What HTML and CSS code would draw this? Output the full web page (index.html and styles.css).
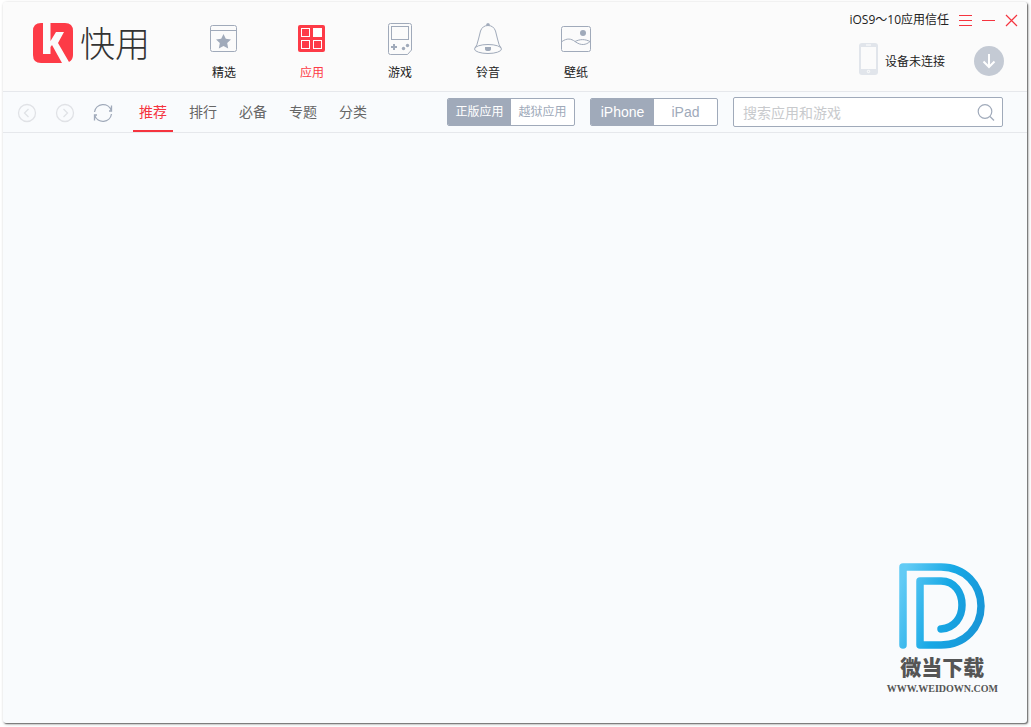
FILE: index.html
```html
<!DOCTYPE html>
<html lang="zh-CN">
<head>
<meta charset="utf-8">
<title>快用</title>
<meta name="viewport" content="width=device-width, initial-scale=1">
<link rel="stylesheet" href="styles.css">
</head>
<body>
<div class="window">
  <header class="header">
    <h1 class="brand">
      <svg class="brand-mark" width="40" height="40" viewBox="0 0 40 40" aria-hidden="true">
        <path d="M10 0V31H17.500V24L19 22L29 40H8Q0 40 0 32V8Q0 0 8 0ZM17.500 0H32Q40 0 40 8V32Q40 37 36 39L25 20L31 9H23L17.500 18Z" fill="#fd3b47"/>
      </svg>
      <span class="brand-name">快用</span>
    </h1>
    <nav class="nav" aria-label="主导航">
      <a class="nav-item" href="#featured">
        <svg width="32" height="34" viewBox="0 0 32 34" fill="none" stroke="#a0aaba" aria-hidden="true">
          <rect x="2.500" y="3.500" width="26" height="26" rx="2"/><path d="M2.500 8.500H28.500"/>
          <path d="M15.500 12L17.800 16.800L23 17.500L19.200 21.100L20.200 26.500L15.500 24L10.800 26.500L11.800 21.100L8 17.500L13.200 16.800Z" fill="#a0aaba" stroke="none"/>
        </svg>
        <span>精选</span>
      </a>
      <a class="nav-item is-active" href="#apps" aria-current="page">
        <svg width="32" height="34" viewBox="0 0 32 34" fill="none" stroke="#fff" aria-hidden="true">
          <rect x="2" y="3" width="27" height="27" rx="2" fill="#fd3b47" stroke="none"/>
          <rect x="5.500" y="6.500" width="8" height="8"/><rect x="17.500" y="6.500" width="8" height="8" fill="#fff"/>
          <rect x="5.500" y="18.500" width="8" height="8"/><rect x="17.500" y="18.500" width="8" height="8"/>
        </svg>
        <span>应用</span>
      </a>
      <a class="nav-item" href="#games">
        <svg width="32" height="34" viewBox="0 0 32 34" fill="none" stroke="#a0aaba" aria-hidden="true">
          <path d="M6.500 1.500H25.500Q27.500 1.500 27.500 3.500V28L23.500 32.500H6.500Q4.500 32.500 4.500 30.500V3.500Q4.500 1.500 6.500 1.500Z"/>
          <rect x="7.500" y="4.500" width="17" height="13"/>
          <path d="M7 25H13M10 22V28" stroke-width="2"/>
          <g fill="#a0aaba" stroke="none"><circle cx="19.500" cy="26.500" r="1.700"/><circle cx="23.500" cy="23.500" r="1.700"/></g>
        </svg>
        <span>游戏</span>
      </a>
      <a class="nav-item" href="#ringtones">
        <svg width="32" height="34" viewBox="0 0 32 34" fill="none" stroke="#a0aaba" aria-hidden="true">
          <ellipse cx="16" cy="27" rx="13.500" ry="4.500"/>
          <path d="M3 26Q5 24 6.500 17L8.500 9Q10.500 3.500 16 3.500T23.500 9L25.500 17Q27 24 29 26"/>
          <path d="M14 3.500Q14 1 16 1T18 3.500ZM13 25H19V27Q19 29 16 29Q13 29 13 27Z" fill="#a0aaba" stroke="none"/>
        </svg>
        <span>铃音</span>
      </a>
      <a class="nav-item" href="#wallpapers">
        <svg width="32" height="34" viewBox="0 0 32 34" fill="none" stroke="#a0aaba" aria-hidden="true">
          <rect x="1.500" y="4.500" width="29" height="25" rx="2"/>
          <circle cx="23" cy="11" r="3" fill="#a0aaba" stroke="none"/>
          <path d="M2 19.500C7 16 11 16.500 15 19.500C21 24 26 23 30 19.500M15 19.500C20 17 25 17 30 19.500"/>
        </svg>
        <span>壁纸</span>
      </a>
    </nav>
    <div class="side">
      <div class="controls">
        <a class="trust" href="#trust">iOS9～10应用信任</a>
        <button class="control" type="button" aria-label="菜单"><svg width="13" height="13" viewBox="0 0 13 13"><path d="M0 1.500H13M0 6.500H13M0 11.500H13" stroke="#f5343f"/></svg></button>
        <button class="control" type="button" aria-label="最小化"><svg width="13" height="13" viewBox="0 0 13 13"><path d="M0 6.500H13" stroke="#f5343f"/></svg></button>
        <button class="control" type="button" aria-label="关闭"><svg width="13" height="13" viewBox="0 0 13 13"><path d="M1 1L12 12M12 1L1 12" fill="none" stroke="#f5343f" stroke-width="1.200"/></svg></button>
      </div>
      <div class="device">
        <svg width="19" height="32" viewBox="0 0 19 32" aria-hidden="true">
          <rect width="19" height="32" rx="3" fill="#e1e5eb"/><rect x="2" y="4" width="15" height="22" fill="#fbfbfb"/>
          <path d="M7 2H12" stroke="#fff"/><circle cx="9.500" cy="28.500" r="1.200" fill="none" stroke="#fff"/>
        </svg>
        <span class="device-state">设备未连接</span>
        <button class="download" type="button" aria-label="下载">
          <svg width="14" height="16" viewBox="0 0 14 16"><path d="M7 1V14M1.500 8.500L7 14L12.500 8.500" fill="none" stroke="#fff" stroke-width="2"/></svg>
        </button>
      </div>
    </div>
  </header>

  <div class="toolbar">
    <div class="history">
      <button class="tool" type="button" aria-label="后退"><svg width="20" height="20" viewBox="0 0 20 20" fill="none" stroke="#e0e2e6" stroke-width="1.300"><circle cx="10" cy="10" r="8.500"/><path d="M11.500 6L7.500 10L11.500 14"/></svg></button>
      <button class="tool" type="button" aria-label="前进"><svg width="20" height="20" viewBox="0 0 20 20" fill="none" stroke="#e0e2e6" stroke-width="1.300"><circle cx="10" cy="10" r="8.500"/><path d="M8.500 6L12.500 10L8.500 14"/></svg></button>
      <button class="tool" type="button" aria-label="刷新"><svg width="20" height="20" viewBox="0 0 20 20" fill="none" stroke="#a0aaba" stroke-width="1.300"><path d="M1.500 9A8.700 8.700 0 0 1 18.300 7.500M18.500 2.500V8H16M18.500 11A8.700 8.700 0 0 1 1.700 12.500M1.500 17.500V12H4"/></svg></button>
    </div>
    <nav class="tabs" aria-label="应用分类">
      <a class="tab is-active" href="#recommended" aria-current="page">推荐</a>
      <a class="tab" href="#ranking">排行</a>
      <a class="tab" href="#essential">必备</a>
      <a class="tab" href="#topics">专题</a>
      <a class="tab" href="#categories">分类</a>
    </nav>
    <div class="filters">
      <div class="segment segment-small" role="group" aria-label="应用版本">
        <button class="option is-on" type="button" aria-pressed="true">正版应用</button>
        <button class="option" type="button" aria-pressed="false">越狱应用</button>
      </div>
      <div class="segment" role="group" aria-label="设备类型">
        <button class="option is-on" type="button" aria-pressed="true">iPhone</button>
        <button class="option" type="button" aria-pressed="false">iPad</button>
      </div>
      <form class="search" role="search">
        <input class="search-input" type="search" aria-label="搜索应用和游戏" placeholder="搜索应用和游戏">
        <button class="search-button" type="submit" aria-label="搜索"><svg width="18" height="18" viewBox="0 0 18 18" fill="none" stroke="#a0aaba" stroke-width="1.200"><circle cx="8" cy="8.500" r="6.800"/><path d="M13 13.500L17 17.500"/></svg></button>
      </form>
    </div>
  </div>

  <main class="content">
    <div class="watermark">
      <svg width="88" height="88" viewBox="0 0 88 88" fill="none" stroke="url(#blue)" stroke-width="7.500" stroke-linecap="round" stroke-linejoin="round" aria-hidden="true">
        <defs><linearGradient id="blue" gradientUnits="userSpaceOnUse" x1="0" y1="30" x2="88" y2="58"><stop offset="0" stop-color="#62cbf5"/><stop offset=".5" stop-color="#17a8e5"/><stop offset="1" stop-color="#1994d6"/></linearGradient></defs>
        <path d="M5 83V5H43C67 5 83 23 83 44S67 83 43 83H22V19H43C57 19 64 31 64 43S57 66 43 67"/>
      </svg>
      <strong class="watermark-name">微当下载</strong>
      <span class="watermark-site">WWW.WEIDOWN.COM</span>
    </div>
  </main>
</div>
</body>
</html>
```

FILE: styles.css
```css
* {
  box-sizing: border-box;
}

body {
  margin: 0;
  padding: 2px 4px 4px 3px;
  background: #fff;
  color: #222;
  font-family: "Open Sans", "Noto Sans CJK SC", sans-serif;
  font-size: 12px;
}

button {
  margin: 0;
  padding: 0;
  border: 0;
  background: none;
  font: inherit;
  color: inherit;
}

a {
  color: inherit;
  text-decoration: none;
}

svg {
  display: block;
  flex: none;
}

.window {
  display: flex;
  flex-direction: column;
  min-height: calc(100vh - 6px);
  border-radius: 3px;
  background: #f9fbfd;
  box-shadow: 1px 1px 1px #777, 1px 1px 3px #999;
}

.header {
  display: flex;
  justify-content: space-between;
  border-bottom: 1px solid #e6e8ec;
  border-radius: 3px 3px 0 0;
  background: #fbfbfb;
}

.brand {
  display: flex;
  align-items: center;
  gap: 7px;
  width: 177px;
  height: 82px;
  margin: 0;
  padding-left: 30px;
  font-size: 35px;
  font-weight: 300;
  line-height: 40px;
  color: #333;
}

.brand-name {
  padding-bottom: 2px;
  font-family: "Noto Sans CJK SC", sans-serif;
}

.nav {
  display: flex;
  flex: 1;
}

.nav-item {
  display: flex;
  flex-direction: column;
  align-items: center;
  gap: 7px;
  width: 88px;
  padding: 20px 0 8px;
  line-height: 20px;
}

.nav-item.is-active {
  color: #fd3b47;
}

.side {
  display: flex;
  flex-direction: column;
  gap: 12px;
  padding: 8px 9px 0 0;
}

.controls {
  display: flex;
  align-items: center;
  gap: 10px;
  line-height: 20px;
}

.device {
  display: flex;
  align-items: center;
  justify-content: flex-end;
  gap: 7px;
  padding-right: 14px;
  line-height: 20px;
}

.device-state {
  padding-top: 5px;
}

.download {
  display: grid;
  place-items: center;
  width: 30px;
  height: 30px;
  margin: 4px 0 0 22px;
  border-radius: 50%;
  background: #c4cad4;
}

.toolbar {
  display: flex;
  align-items: center;
  height: 41px;
  padding: 0 24px 0 14px;
  border-bottom: 1px solid #e6e8ec;
}

.history {
  display: flex;
  gap: 18px;
  padding-top: 2px;
}

.tabs {
  display: flex;
  align-self: stretch;
  gap: 10px;
  margin-left: 20px;
}

.tab {
  width: 40px;
  border-bottom: 2px solid transparent;
  font-size: 14px;
  line-height: 40px;
  text-align: center;
  color: #666;
}

.tab.is-active {
  border-color: #f5343f;
  color: #f5343f;
}

.filters {
  display: flex;
  align-items: center;
  gap: 15px;
  margin-left: auto;
}

.segment {
  display: flex;
  width: 128px;
  height: 28px;
  overflow: hidden;
  border: 1px solid #a0aaba;
  border-radius: 2px;
  background: #fff;
  color: #a0aaba;
  font-family: "Liberation Sans", "Noto Sans CJK SC", sans-serif;
  font-size: 14px;
}

.segment-small {
  font-size: 12px;
}

.option {
  flex: 1;
  line-height: 26px;
}

.option.is-on {
  background: #a0aaba;
  color: #fff;
}

.search {
  display: flex;
  align-items: center;
  width: 270px;
  height: 30px;
  padding: 0 7px 0 9px;
  border: 1px solid #a0aaba;
  border-radius: 2px;
  background: #fff;
}

.search-input {
  flex: 1;
  min-width: 0;
  padding: 0;
  border: 0;
  outline: 0;
  background: none;
  font: inherit;
  font-size: 14px;
}

.search-input::placeholder {
  color: #c8cacd;
}

.content {
  position: relative;
  flex: 1;
}

.watermark {
  position: absolute;
  right: 29px;
  bottom: 27px;
  display: flex;
  flex-direction: column;
  align-items: center;
  color: #555;
}

.watermark-name {
  margin: 1px 0;
  font-family: "Noto Sans CJK SC", sans-serif;
  font-size: 21px;
  font-weight: 900;
  line-height: 30px;
}

.watermark-site {
  font-family: "Liberation Serif", serif;
  font-size: 10px;
  font-weight: 700;
  line-height: 14px;
}
```
